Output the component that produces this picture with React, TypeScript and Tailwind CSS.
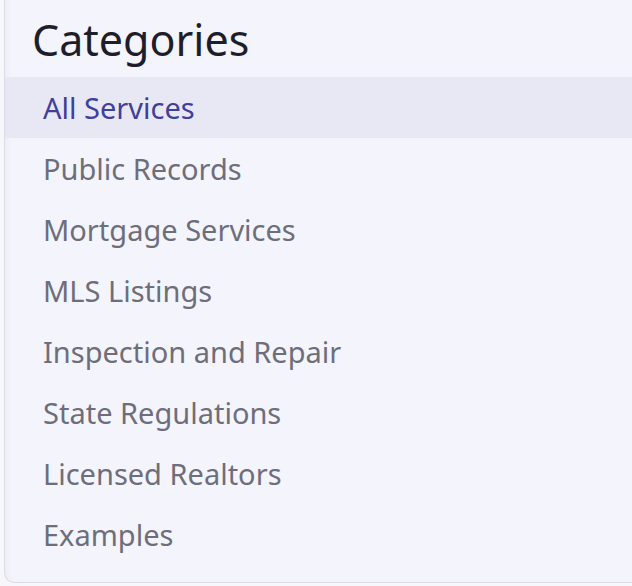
const categories = [
  "All Services",
  "Public Records",
  "Mortgage Services",
  "MLS Listings",
  "Inspection and Repair",
  "State Regulations",
  "Licensed Realtors",
  "Examples",
];

export default function App() {
  const active = "All Services";
  return (
    <div className="h-[586px] w-[632px] overflow-hidden bg-[#f7f7fb] font-['Noto_Sans',sans-serif]">
      <div className="ml-[4px] h-[583px] rounded-bl-[10px] border-b border-l border-[#dcdce6] bg-[#f4f4fd] shadow-[inset_6px_0_8px_-6px_rgba(0,0,0,0.06)]">
        <h2 className="h-[77px] pl-[27px] pt-[10px] text-[43px] leading-[60px] text-[#1e1e2a]">Categories</h2>
        <ul>
          {categories.map((c) => (
            <li
              key={c}
              className={
                c === active
                  ? "h-[61px] bg-[#e8e8f4] pl-[38px] text-[29px] leading-[61px] text-[#3f3f9c]"
                  : "h-[61px] pl-[38px] text-[29px] leading-[61px] text-[#6e6e7b]"
              }
            >
              {c}
            </li>
          ))}
        </ul>
      </div>
    </div>
  );
}
